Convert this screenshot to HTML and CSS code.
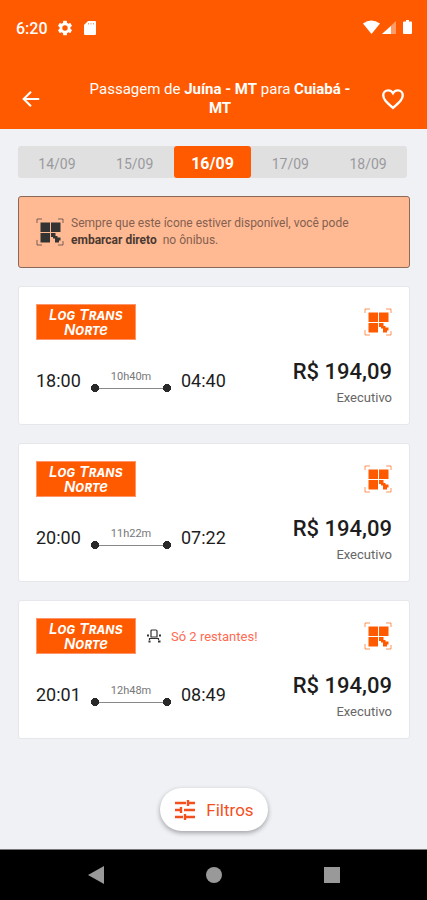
FILE: index.html
```html
<!DOCTYPE html>
<html lang="pt-BR">
<head>
<meta charset="utf-8">
<meta name="viewport" content="width=device-width, initial-scale=1">
<title>Passagens</title>
<link rel="stylesheet" href="styles.css">
</head>
<body>
<svg class="sprite" aria-hidden="true">
  <symbol id="qr" viewBox="0 0 28 28">
    <path d="M1 5V1h5M22 1h5v4M1 22v5h5M22 27h5v-4" fill="none" stroke="currentColor" stroke-width="1" opacity=".65"/>
    <path d="M4.500 4.500h9.500v9.500h-9.500zM15 4.500h9.500v9.500h-9.500zM4.500 15h9.500v9.500h-9.500zM15 15h4.500v3h2v1.500h3v3h-1.500v2h-4v-4h-2v-1.500H15z" fill="currentColor"/>
  </symbol>
  <symbol id="seat" viewBox="0 0 16 16">
    <path d="M5 9V3q0-1 1-1h4q1 0 1 1v6zM3.500 12v-1.500h9V12" fill="none" stroke="currentColor" stroke-width="1.200"/>
    <path d="M1 6.500h2v2H1zM13 6.500h2v2h-2zM2.500 12.500h2v2h-2zM12 12.500h2.500v2H12z" fill="currentColor"/>
  </symbol>
</svg>
<div class="app">
  <header class="header">
    <div class="status">
      <span class="clock">6:20</span>
      <svg class="status-gear" viewBox="0 0 24 24" aria-hidden="true"><path fill="currentColor" fill-rule="evenodd" d="M19.140 12.940c.04-.3.06-.61.06-.94s-.02-.64-.07-.94l2.030-1.580a.49.49 0 0 0 .12-.61l-1.920-3.320a.49.49 0 0 0-.59-.22l-2.390.96a7 7 0 0 0-1.620-.94l-.36-2.540a.48.48 0 0 0-.48-.41h-3.840a.47.47 0 0 0-.47.41l-.36 2.540c-.59.24-1.130.57-1.620.94l-2.390-.96a.48.48 0 0 0-.59.22L2.740 8.870a.47.47 0 0 0 .12.61l2.030 1.580a6 6 0 0 0-.02 1.880l-2.030 1.580a.49.49 0 0 0-.12.61l1.920 3.320c.12.22.37.29.59.22l2.390-.96c.5.38 1.030.7 1.620.94l.36 2.540c.05.24.24.41.48.41h3.840c.24 0 .44-.17.47-.41l.36-2.540a7 7 0 0 0 1.620-.94l2.390.96c.22.08.47 0 .59-.22l1.920-3.320a.47.47 0 0 0-.12-.61zM12 15.600a3.600 3.600 0 1 1 0-7.200 3.600 3.600 0 0 1 0 7.200z"/></svg>
      <svg class="status-card" viewBox="0 0 12 14" aria-hidden="true"><path fill="currentColor" d="M4 0h7q1 0 1 1v12q0 1-1 1H1q-1 0-1-1V4z"/><path d="M4.500 2v1.500M7 2v1.500M9.500 2v1.500" stroke="#ff9a66"/></svg>
      <svg class="status-signals" viewBox="0 0 50 16" aria-hidden="true">
        <path fill="currentColor" d="M0 3.500Q8-2.500 17 3.500L8.500 14z"/>
        <path fill="currentColor" opacity=".4" d="M33 1v13H19z"/><path fill="currentColor" d="M28 6v8H19z"/>
        <path fill="currentColor" d="M43 0h3v1.500h2q1 0 1 1V13q0 1-1 1h-7q-1 0-1-1V2.500q0-1 1-1h2z"/>
      </svg>
    </div>
    <div class="titlebar">
      <button class="icon-button" type="button" aria-label="Voltar"><svg viewBox="0 0 24 24"><path d="M21 12H4M12 4l-8 8 8 8" fill="none" stroke="currentColor" stroke-width="2.200"/></svg></button>
      <h1 class="title">Passagem de <b>Juína - MT</b> para <b>Cuiabá - MT</b></h1>
      <button class="icon-button" type="button" aria-label="Favoritar"><svg class="heart" viewBox="0 0 24 24"><path d="M12 20.200C5.500 14.500 3 12 3 8.500A4.500 4.500 0 0 1 7.500 4C9.300 4 11 5 12 6.600 13 5 14.700 4 16.500 4A4.500 4.500 0 0 1 21 8.500c0 3.500-2.500 6-9 11.700z" fill="none" stroke="currentColor" stroke-width="2.200"/></svg></button>
    </div>
  </header>
  <main class="content">
    <nav class="dates" aria-label="Datas">
      <button class="date" type="button">14/09</button>
      <button class="date" type="button">15/09</button>
      <button class="date date-active" type="button">16/09</button>
      <button class="date" type="button">17/09</button>
      <button class="date" type="button">18/09</button>
    </nav>
    <section class="notice">
      <svg class="qr" aria-hidden="true"><use href="#qr"/></svg>
      <p class="notice-text">Sempre que este ícone estiver disponível, você pode <b>embarcar direto</b>&nbsp; no ônibus.</p>
    </section>
    <article class="trip">
      <div class="trip-top">
        <div class="logo"><span>Log Trans</span><span>Norte</span></div>
        <svg class="qr" aria-hidden="true"><use href="#qr"/></svg>
      </div>
      <div class="trip-bottom">
        <time class="time">18:00</time>
        <div class="route"><span class="duration">10h40m</span><span class="line"></span></div>
        <time class="time">04:40</time>
        <div class="fare"><strong class="price">R$ 194,09</strong><span class="class">Executivo</span></div>
      </div>
    </article>
    <article class="trip">
      <div class="trip-top">
        <div class="logo"><span>Log Trans</span><span>Norte</span></div>
        <svg class="qr" aria-hidden="true"><use href="#qr"/></svg>
      </div>
      <div class="trip-bottom">
        <time class="time">20:00</time>
        <div class="route"><span class="duration">11h22m</span><span class="line"></span></div>
        <time class="time">07:22</time>
        <div class="fare"><strong class="price">R$ 194,09</strong><span class="class">Executivo</span></div>
      </div>
    </article>
    <article class="trip">
      <div class="trip-top">
        <div class="logo"><span>Log Trans</span><span>Norte</span></div>
        <div class="seats"><svg class="seat" aria-hidden="true"><use href="#seat"/></svg><span>Só 2 restantes!</span></div>
        <svg class="qr" aria-hidden="true"><use href="#qr"/></svg>
      </div>
      <div class="trip-bottom">
        <time class="time">20:01</time>
        <div class="route"><span class="duration">12h48m</span><span class="line"></span></div>
        <time class="time">08:49</time>
        <div class="fare"><strong class="price">R$ 194,09</strong><span class="class">Executivo</span></div>
      </div>
    </article>
    <button class="filter" type="button">
      <svg class="filter-icon" viewBox="0 0 22 20" aria-hidden="true"><path d="M1 3h11M14 0v6M14 3h7M1 10h6M7 7v6M10 10h11M1 17h8M11 14v6M11 17h10" fill="none" stroke="currentColor" stroke-width="2.400"/></svg>
      Filtros
    </button>
  </main>
  <footer class="system">
    <svg class="nav-icon" viewBox="0 0 18 18" aria-hidden="true"><path d="M17 0v18L1 9z" fill="currentColor"/></svg>
    <svg class="nav-icon" viewBox="0 0 18 18" aria-hidden="true"><circle cx="9" cy="9" r="8" fill="currentColor"/></svg>
    <svg class="nav-icon" viewBox="0 0 18 18" aria-hidden="true"><path d="M1 1h16v16H1z" fill="currentColor"/></svg>
  </footer>
</div>
</body>
</html>
```
FILE: styles.css
```css
* { box-sizing: border-box; }
body { margin: 0; background: #eff1f5; color: #1d1d1d; font-family: Roboto, "Liberation Sans", sans-serif; }
button { border: 0; padding: 0; background: none; color: inherit; font: inherit; }
svg { display: block; flex: none; }
.sprite { position: absolute; width: 0; height: 0; }
.app { min-height: 100vh; display: flex; flex-direction: column; }

.header { background: #ff5a00; color: #fff; padding: 16px 16px 11px; }
.status { display: flex; align-items: center; height: 24px; }
.clock { font-size: 16px; font-weight: 500; }
.status-gear { width: 18px; height: 18px; margin-left: 8px; }
.status-card { width: 12px; height: 14px; margin-left: 10px; }
.status-signals { width: 50px; height: 16px; margin-left: auto; margin-right: -2px; }
.titlebar { display: flex; align-items: center; gap: 28px; margin-top: 40px; padding: 0 6px 0 3px; }
.icon-button { display: flex; align-items: center; justify-content: center; width: 24px; height: 24px; flex: none; }
.icon-button svg { width: 22px; height: 22px; }
.icon-button .heart { width: 26px; height: 26px; }
.title { flex: 1; margin: 0; padding-left: 16px; font-size: 15px; line-height: 19px; font-weight: 400; text-align: center; }
.title b { font-weight: 700; }

.content { flex: 1; display: flex; flex-direction: column; gap: 18px; padding: 17px 17px 18px 18px; }
.dates { display: flex; background: #e0e0e0; border-radius: 3px; margin-right: 3px; }
.date { flex: 1; height: 32px; padding-top: 3px; color: #9a9a9e; font-size: 14px; }
.date-active { background: #ff5a00; border-radius: 3px; color: #fff; font-size: 16px; font-weight: 700; }

.notice { display: flex; align-items: center; gap: 7px; height: 72px; padding: 0 17px; background: #ffba94; border: 1px solid #8c6957; border-radius: 3px; color: #333; }
.notice-text { flex: 1; margin: 0; padding-right: 24px; color: #84604f; font-size: 12px; line-height: 17px; }
.notice-text b { color: #4b3931; }
.qr { width: 28px; height: 28px; }

.trip { background: #fff; border: 1px solid #e5e7eb; border-radius: 3px; padding: 17px 17px 14px; }
.trip-top { display: flex; align-items: center; height: 36px; }
.trip-top .qr { margin-left: auto; color: #ff5a00; }
.logo { width: 100px; height: 36px; display: flex; flex-direction: column; align-items: center; justify-content: center; background: #ff5a00; border: 1px solid #ff966b; color: #fff; font-family: Inter, sans-serif; font-size: 15px; font-style: italic; font-variant: small-caps; font-weight: 600; line-height: 15px; }
.seats { display: flex; align-items: center; gap: 9px; margin-left: 10px; color: #ff6a52; font-size: 13px; }
.seat { width: 16px; height: 16px; color: #333; }
.trip-bottom { display: flex; align-items: flex-start; margin-top: 18px; }
.time { width: 46px; margin-top: 12px; font-size: 18px; line-height: 22px; }
.route { width: 80px; margin: 12px 10px 0 9px; display: flex; flex-direction: column; align-items: center; }
.duration { color: #777; font-size: 11px; line-height: 14px; }
.line { width: 100%; height: 8px; background: radial-gradient(circle at 4px 4px, #292929 4px, transparent 4px), radial-gradient(circle at calc(100% - 4px) 4px, #292929 4px, transparent 4px), linear-gradient(#888, #888) center / calc(100% - 8px) 1px no-repeat; }
.fare { margin-left: auto; display: flex; flex-direction: column; align-items: flex-end; }
.price { font-size: 22px; line-height: 28px; font-weight: 500; }
.class { color: #666; font-size: 13px; line-height: 24px; }

.filter { align-self: center; display: flex; align-items: center; gap: 10px; height: 43px; margin-top: auto; padding: 0 14px; background: #fff; border-radius: 22px; box-shadow: 0 2px 5px #0005; color: #f4501e; font-size: 17px; }
.filter-icon { width: 22px; height: 20px; }
.system { height: 51px; display: flex; align-items: center; justify-content: center; gap: 100px; background: #000; border-top: 1px solid #777; color: #999; }
.nav-icon { width: 18px; height: 18px; }
```
